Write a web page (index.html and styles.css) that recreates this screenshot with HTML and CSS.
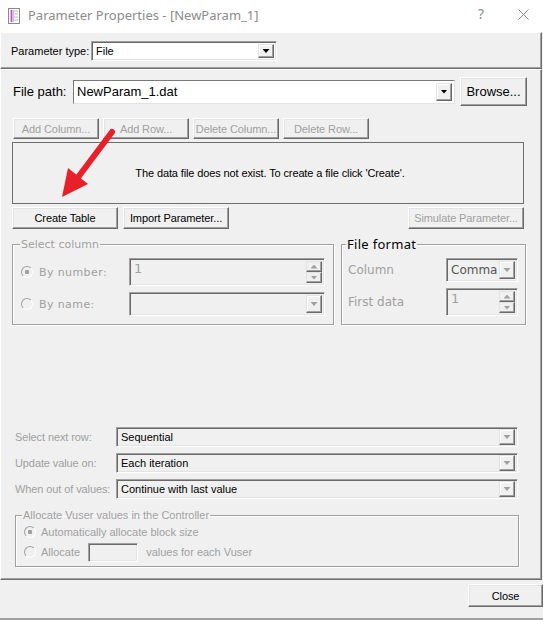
FILE: index.html
```html
<!DOCTYPE html>
<html lang="en">

<head>
    <meta charset="UTF-8">
    <meta name="viewport" content="width=device-width, initial-scale=1.0">
    <title>Parameter Properties</title>
    <link rel="stylesheet" href="styles.css">
</head>

<body>
    <div class="window">
        <div class="titlebar">
            <svg class="app-icon" width="14" height="16" viewBox="0 0 14 16">
                <rect x="1.5" y="0.5" width="11" height="15" fill="#fff" stroke="#8a8a8a" />
                <rect x="4" y="2" width="1" height="12" fill="#b040c0" />
                <path d="M3 3h4M3 5h4M3 7h4M3 9h4M3 11h4M3 13h4" stroke="#c070d0" stroke-width="1" />
                <path d="M7 3h4M7 6h4M7 9h4M7 12h4" stroke="#b8b8b8" stroke-width="1" />
            </svg>
            <span class="title">Parameter Properties - [NewParam_1]</span>
            <span class="help">?</span>
            <svg class="close-x" width="11" height="11" viewBox="0 0 11 11">
                <path d="M0.5 0.5L10.5 10.5M10.5 0.5L0.5 10.5" stroke="#8a8a8a" stroke-width="1" />
            </svg>
        </div>

        <div class="typebar panel">
            <span class="type-label">Parameter type:</span>
            <div class="combo white type-combo">
                <span class="combo-text">File</span>
                <span class="drop"></span>
            </div>
        </div>

        <div class="main panel">
            <div class="path-row">
                <span class="path-label">File path:</span>
                <div class="combo white path-combo">
                    <span class="combo-text">NewParam_1.dat</span>
                    <span class="drop"></span>
                </div>
                <button class="btn browse">Browse...</button>
            </div>

            <div class="btn-row">
                <button class="btn small" disabled>Add Column...</button>
                <button class="btn small" disabled>Add Row...</button>
                <button class="btn small" disabled>Delete Column...</button>
                <button class="btn small" disabled>Delete Row...</button>
            </div>

            <div class="message">The data file does not exist. To create a file click 'Create'.</div>

            <div class="action-row">
                <button class="btn wide">Create Table</button>
                <button class="btn wide">Import Parameter...</button>
                <button class="btn sim" disabled>Simulate Parameter...</button>
            </div>

            <div class="groups">
                <fieldset class="group select-col">
                    <legend class="muted">Select column</legend>
                    <div class="group-grid">
                        <label class="radio-line muted"><span class="radio checked"></span>By number:</label>
                        <div class="field tall">
                            <span class="field-text">1</span>
                            <span class="spin"><span class="spin-btn up"></span><span class="spin-btn down"></span></span>
                        </div>
                        <label class="radio-line muted"><span class="radio"></span>By name:</label>
                        <div class="field">
                            <span class="field-text"></span>
                            <span class="drop off"></span>
                        </div>
                    </div>
                </fieldset>

                <fieldset class="group file-format">
                    <legend>File format</legend>
                    <div class="group-grid ff-grid">
                        <span class="ff-label">Column</span>
                        <div class="field ff-combo">
                            <span class="field-text">Comma</span>
                            <span class="drop off"></span>
                        </div>
                        <span class="ff-label">First data</span>
                        <div class="field tall">
                            <span class="field-text">1</span>
                            <span class="spin"><span class="spin-btn up"></span><span class="spin-btn down"></span></span>
                        </div>
                    </div>
                </fieldset>
            </div>

            <div class="options">
                <span class="opt-label">Select next row:</span>
                <div class="field opt"><span class="opt-text">Sequential</span><span class="drop off"></span></div>
                <span class="opt-label">Update value on:</span>
                <div class="field opt"><span class="opt-text">Each iteration</span><span class="drop off"></span></div>
                <span class="opt-label">When out of values:</span>
                <div class="field opt"><span class="opt-text">Continue with last value</span><span class="drop off"></span></div>
            </div>

            <fieldset class="alloc">
                <legend>Allocate Vuser values in the Controller</legend>
                <label class="alloc-line"><span class="radio checked"></span>Automatically allocate block size</label>
                <label class="alloc-line"><span class="radio"></span>Allocate <span class="field alloc-input"></span> values for each Vuser</label>
            </fieldset>
        </div>

        <div class="footer">
            <button class="btn close-btn">Close</button>
        </div>

        <svg class="pointer" width="543" height="620" viewBox="0 0 543 620">
            <path d="M112 132L76 180" stroke="#e8202a" stroke-width="6" stroke-linecap="round" />
            <polygon points="62,197 68,168 88,184" fill="#e8202a" />
        </svg>
    </div>
</body>

</html>
```

FILE: styles.css
```css
* {
    box-sizing: border-box;
}

body {
    margin: 0;
    background-color: #f0f0f0;
    font-family: "Liberation Sans", Arial, sans-serif;
    font-size: 11px;
    color: #000;
}

.window {
    position: relative;
    width: 543px;
    height: 620px;
    overflow: hidden;
}

.titlebar {
    height: 32px;
    background-color: #fff;
    display: flex;
    align-items: center;
    padding-left: 7px;
}

.app-icon {
    margin-right: 7px;
    margin-top: -1px;
}

.title {
    flex: 1;
    font-family: "Noto Sans", "Liberation Sans", sans-serif;
    font-size: 13px;
    color: #8c8c8c;
    margin-top: -3px;
}

.help {
    font-family: "Noto Sans", sans-serif;
    font-size: 14px;
    color: #8c8c8c;
    margin-right: 34px;
    margin-top: -6px;
}

.close-x {
    margin-right: 14px;
    margin-top: -4px;
}

/* raised 3d panels */
.panel {
    border: 1px solid;
    border-color: #fff #707070 #707070 #fff;
    box-shadow: inset -1px -1px #a0a0a0;
}

.typebar {
    height: 37px;
    margin-right: 1px;
    display: flex;
    align-items: center;
    padding-left: 10px;
}

.type-label {
    width: 80px;
}

.combo,
.field {
    display: flex;
    align-items: stretch;
    border: 1px solid;
    border-color: #a0a0a0 #fff #fff #a0a0a0;
    box-shadow: inset 1px 1px #696969, inset -1px -1px #e3e3e3;
    background-color: #f0f0f0;
    padding: 2px;
}

.combo.white {
    background-color: #fff;
}

.combo-text,
.field-text,
.opt-text {
    flex: 1;
    display: flex;
    align-items: center;
    padding-left: 2px;
}

.type-combo {
    width: 186px;
    height: 20px;
    margin-top: 1px;
}

.drop {
    width: 16px;
    border: 1px solid;
    border-color: #e3e3e3 #696969 #696969 #e3e3e3;
    box-shadow: inset -1px -1px #a0a0a0, inset 1px 1px #fff;
    background-color: #f0f0f0;
    display: flex;
    align-items: center;
    justify-content: center;
}

.drop::after {
    content: "";
    width: 7px;
    height: 4px;
    background-color: #000;
    clip-path: polygon(0 0, 100% 0, 50% 100%);
}

.drop.off::after {
    background-color: #a0a0a0;
}

.main {
    height: 511px;
    margin-right: 1px;
    padding: 7px 0 0 11px;
    display: flex;
    flex-direction: column;
}

.path-row {
    display: flex;
    align-items: center;
    height: 29px;
    font-size: 13px;
}

.path-label {
    width: 61px;
    padding-left: 1px;
}

.path-combo {
    width: 382px;
    height: 24px;
    padding: 1px;
    border-color: #7a7a7a #e3e3e3 #e3e3e3 #7a7a7a;
    box-shadow: none;
}

.path-combo .drop {
    margin: 1px;
}

.btn {
    font-family: "Liberation Sans", Arial, sans-serif;
    font-size: 11px;
    letter-spacing: -0.1px;
    color: #000;
    background-color: #f0f0f0;
    border: 1px solid;
    border-color: #fff #696969 #696969 #fff;
    box-shadow: inset -1px -1px #a0a0a0, inset 1px 1px #e3e3e3;
    padding: 0;
    border-radius: 0;
}

.btn:disabled {
    color: #a0a0a0;
}

.browse {
    width: 67px;
    height: 29px;
    margin-left: 5px;
    font-size: 13px;
    letter-spacing: 0;
}

.btn-row {
    display: flex;
    gap: 4px;
    margin-top: 12px;
    padding-left: 1px;
}

.small {
    width: 86px;
    height: 21px;
}

.message {
    margin-top: 3px;
    width: 512px;
    height: 62px;
    border: 1px solid #6e6e6e;
    display: flex;
    align-items: center;
    justify-content: center;
    padding-left: 4px;
    letter-spacing: -0.12px;
}

.action-row {
    display: flex;
    gap: 5px;
    margin-top: 3px;
    width: 512px;
}

.wide {
    width: 106px;
    height: 22px;
}

.sim {
    width: 116px;
    height: 22px;
    margin-left: auto;
}

.groups {
    display: flex;
    gap: 7px;
    margin-top: 8px;
}

.group {
    margin: 0;
    height: 88px;
    border: 1px solid #a0a0a0;
    box-shadow: inset 1px 1px #fff, 1px 1px #fff;
    padding: 0 8px 0 8px;
}

.group legend {
    padding: 0 1px;
    margin-left: -1px;
    font-family: "DejaVu Sans", sans-serif;
    font-size: 11px;
    line-height: 15px;
}

.select-col {
    width: 322px;
}

.file-format {
    width: 185px;
    padding-left: 6px;
    padding-right: 7px;
}

.file-format legend {
    font-family: "Noto Sans", sans-serif;
    font-size: 13px;
    margin-left: -2px;
    letter-spacing: 0.3px;
}

.muted,
.group legend.muted {
    color: #a0a0a0;
}

.group-grid {
    display: grid;
    grid-template-columns: 108px 1fr;
    grid-template-rows: 28px 24px;
    row-gap: 6px;
    margin-top: 6px;
}

.ff-grid {
    grid-template-columns: 98px 72px;
    grid-template-rows: 24px 28px;
}

.radio-line {
    display: flex;
    align-items: center;
    font-family: "DejaVu Sans", sans-serif;
    font-size: 11px;
    letter-spacing: 0.4px;
}

.radio {
    width: 12px;
    height: 12px;
    border-radius: 50%;
    border: 1px solid;
    border-color: #a0a0a0 #fff #fff #a0a0a0;
    background-color: #f0f0f0;
    margin-right: 6px;
    flex-shrink: 0;
}

.radio.checked {
    background: radial-gradient(circle, #a0a0a0 0 2px, #f0f0f0 2.5px);
}

.field.tall .field-text,
.ff-combo .field-text {
    align-items: flex-start;
    font-family: "DejaVu Sans", sans-serif;
    font-size: 13px;
    color: #a0a0a0;
}

.ff-combo .field-text {
    align-items: center;
    font-size: 12px;
    color: #555;
}

.ff-label {
    display: flex;
    align-items: center;
    font-family: "DejaVu Sans", sans-serif;
    font-size: 12px;
    color: #a0a0a0;
}

.spin {
    width: 16px;
    display: flex;
    flex-direction: column;
}

.spin-btn {
    flex: 1;
    border: 1px solid;
    border-color: #e3e3e3 #696969 #696969 #e3e3e3;
    box-shadow: inset -1px -1px #a0a0a0;
    display: flex;
    align-items: center;
    justify-content: center;
}

.spin-btn::after {
    content: "";
    width: 7px;
    height: 4px;
    background-color: #a0a0a0;
    clip-path: polygon(50% 0, 100% 100%, 0 100%);
}

.spin-btn.down::after {
    clip-path: polygon(0 0, 100% 0, 50% 100%);
}

.options {
    display: grid;
    grid-template-columns: 101px 402px;
    grid-auto-rows: 20px;
    row-gap: 6px;
    margin-top: 102px;
    padding-left: 3px;
}

.opt-label {
    display: flex;
    align-items: center;
    color: #a0a0a0;
    letter-spacing: -0.1px;
}

.field.opt {
    padding: 1px 2px 1px 2px;
}

.opt-text {
    color: #000;
}

.alloc {
    margin: 10px 0 0 3px;
    width: 504px;
    height: 58px;
    border: 1px solid #a0a0a0;
    box-shadow: inset 1px 1px #fff, 1px 1px #fff;
    padding: 0 0 0 8px;
    color: #a0a0a0;
}

.alloc legend {
    padding: 0 1px;
    margin-left: -2px;
    line-height: 13px;
}

.alloc-line {
    display: flex;
    align-items: center;
    height: 20px;
}

.alloc-line .radio {
    margin-right: 5px;
}

.alloc-input {
    width: 50px;
    height: 19px;
    margin: 0 8px 0 8px;
}

.footer {
    height: 40px;
    display: flex;
    justify-content: flex-end;
    align-items: flex-start;
    padding-top: 4px;
    border-bottom: 2px solid #a0a0a0;
}

.close-btn {
    width: 75px;
    height: 23px;
}

.pointer {
    position: absolute;
    left: 0;
    top: 0;
    pointer-events: none;
}
```
